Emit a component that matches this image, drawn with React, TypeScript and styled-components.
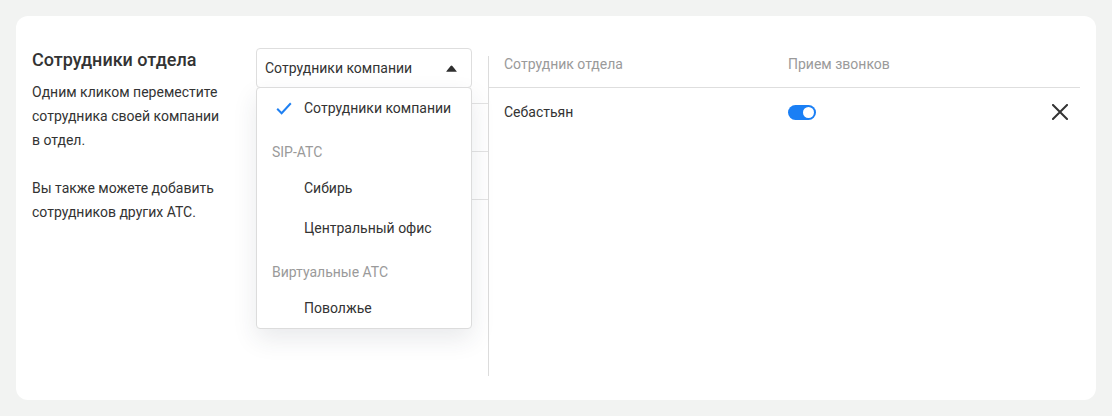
import React from 'react';
import styled, { createGlobalStyle } from 'styled-components';

const GlobalStyle = createGlobalStyle`
  * { box-sizing: border-box; }
  body {
    margin: 0;
    background: #f2f3f2;
    font-family: Roboto, "Liberation Sans", Arial, sans-serif;
    color: #333333;
  }
`;

const Page = styled.div`
  padding: 16px;
`;

const Card = styled.div`
  display: flex;
  height: 384px;
  padding: 32px 16px 24px 16px;
  background: #ffffff;
  border-radius: 12px;
`;

const Info = styled.div`
  width: 224px;
  flex-shrink: 0;
`;

const Title = styled.h2`
  margin: 0;
  font-size: 18px;
  line-height: 24px;
  font-weight: 500;
  color: #333333;
`;

const Paragraph = styled.p<{ spaced?: boolean }>`
  margin: ${p => (p.spaced ? '24px' : '8px')} 0 0;
  max-width: 192px;
  font-size: 14px;
  line-height: 24px;
  color: #333333;
`;

const Picker = styled.div`
  width: 232px;
  flex-shrink: 0;
  display: flex;
  flex-direction: column;
`;

const SelectWrap = styled.div`
  position: relative;
  width: 216px;
`;

const SelectBox = styled.div`
  display: flex;
  align-items: center;
  justify-content: space-between;
  height: 40px;
  padding: 0 14px 0 8px;
  border: 1px solid #dedede;
  border-radius: 4px;
  font-size: 14px;
  color: #333333;
`;

const Menu = styled.div`
  position: absolute;
  top: calc(100% - 1px);
  left: 0;
  width: 216px;
  background: #ffffff;
  border: 1px solid #dcdcdc;
  border-radius: 4px;
  box-shadow: 0 10px 24px rgba(40, 50, 70, 0.1);
  z-index: 5;
`;

const MenuItem = styled.div`
  display: flex;
  align-items: center;
  height: 40px;
  padding-left: 19px;
  font-size: 14px;
  color: #333333;
`;

const CheckSlot = styled.span`
  display: flex;
  align-items: center;
  width: 28px;
`;

const GroupLabel = styled.div`
  display: flex;
  align-items: center;
  height: 32px;
  margin-top: 8px;
  padding-left: 15px;
  font-size: 14px;
  color: #9a9a9a;
`;

const CompanyList = styled.div`
  margin-top: 15px;
  border-top: 1px solid #e3e3e3;
`;

const CompanyRow = styled.div`
  height: 48px;
  border-bottom: 1px solid #e3e3e3;
`;

const Members = styled.div`
  flex: 1;
  margin-top: 8px;
  height: 320px;
  border-left: 1px solid #dcdcdc;
`;

const TableRow = styled.div<{ header?: boolean }>`
  display: grid;
  grid-template-columns: 284px 1fr auto;
  align-items: center;
  padding: ${p => (p.header ? '0 12px 15px 15px' : '0 12px 0 15px')};
  height: ${p => (p.header ? '32px' : '48px')};
  line-height: 16px;
  font-size: 14px;
  color: ${p => (p.header ? '#9a9a9a' : '#333333')};
  border-bottom: ${p => (p.header ? '1px solid #dedede' : 'none')};
`;

const Toggle = styled.span<{ on?: boolean }>`
  position: relative;
  display: block;
  width: 28px;
  height: 15px;
  border-radius: 8px;
  background: ${p => (p.on ? '#1a7ff5' : '#cccccc')};

  &::after {
    content: '';
    position: absolute;
    top: 2px;
    ${p => (p.on ? 'right: 2px;' : 'left: 2px;')}
    width: 11px;
    height: 11px;
    border-radius: 50%;
    background: #ffffff;
  }
`;

const RemoveButton = styled.button`
  display: flex;
  align-items: center;
  justify-content: center;
  padding: 0;
  border: none;
  background: transparent;
  cursor: pointer;
`;

const Caret = () => (
  <svg width="11" height="7" viewBox="0 0 11 7">
    <path d="M4.6 0.9 Q5.5 -0.1 6.4 0.9 L10.6 6.2 Q11 6.8 10.2 6.8 L0.8 6.8 Q0 6.8 0.4 6.2 Z" fill="#2f2f2f" />
  </svg>
);

const Check = () => (
  <svg width="16" height="13" viewBox="0 0 16 13">
    <path d="M1.2 6.8 L5.6 11.2 L14.8 1.2" fill="none" stroke="#1f80f2" strokeWidth="2" />
  </svg>
);

const Cross = () => (
  <svg width="16" height="16" viewBox="0 0 16 16">
    <path d="M1 1 L15 15 M15 1 L1 15" stroke="#333333" strokeWidth="2" strokeLinecap="square" />
  </svg>
);

const members = [{ name: 'Себастьян', calls: true }];

export default function App() {
  return (
    <>
      <GlobalStyle />
      <Page>
        <Card>
          <Info>
            <Title>Сотрудники отдела</Title>
            <Paragraph>Одним кликом переместите сотрудника своей компании в отдел.</Paragraph>
            <Paragraph spaced>Вы также можете добавить сотрудников других АТС.</Paragraph>
          </Info>

          <Picker>
            <SelectWrap>
              <SelectBox>
                <span>Сотрудники компании</span>
                <Caret />
              </SelectBox>
              <Menu>
                <MenuItem>
                  <CheckSlot><Check /></CheckSlot>
                  Сотрудники компании
                </MenuItem>
                <GroupLabel>SIP-АТС</GroupLabel>
                <MenuItem><CheckSlot />Сибирь</MenuItem>
                <MenuItem><CheckSlot />Центральный офис</MenuItem>
                <GroupLabel>Виртуальные АТС</GroupLabel>
                <MenuItem><CheckSlot />Поволжье</MenuItem>
              </Menu>
            </SelectWrap>
            <CompanyList>
              <CompanyRow />
              <CompanyRow />
            </CompanyList>
          </Picker>

          <Members>
            <TableRow header>
              <span>Сотрудник отдела</span>
              <span>Прием звонков</span>
              <span />
            </TableRow>
            {members.map(m => (
              <TableRow key={m.name}>
                <span>{m.name}</span>
                <Toggle on={m.calls} />
                <RemoveButton aria-label="Удалить"><Cross /></RemoveButton>
              </TableRow>
            ))}
          </Members>
        </Card>
      </Page>
    </>
  );
}
